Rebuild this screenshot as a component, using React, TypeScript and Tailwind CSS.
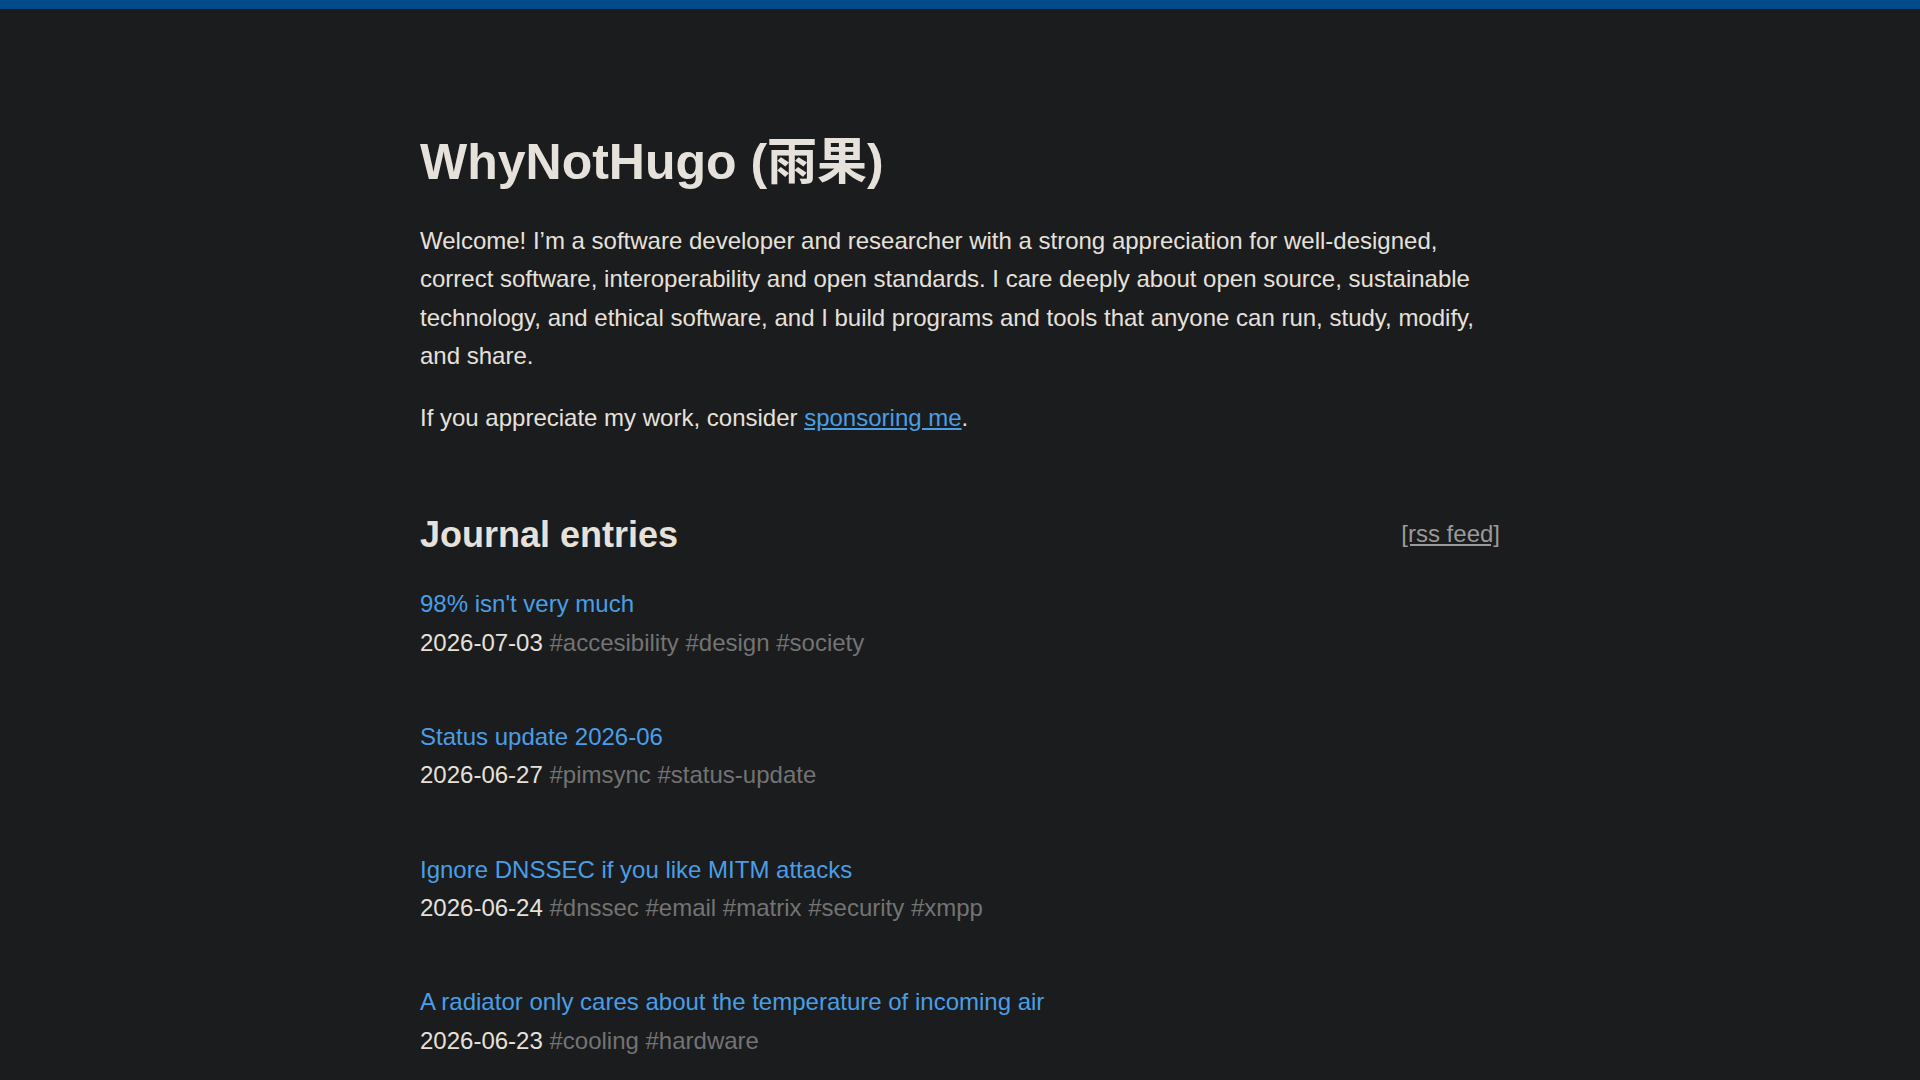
import React from "react";

const entries = [
  { title: "98% isn't very much", date: "2026-07-03", tags: ["accesibility", "design", "society"] },
  { title: "Status update 2026-06", date: "2026-06-27", tags: ["pimsync", "status-update"] },
  { title: "Ignore DNSSEC if you like MITM attacks", date: "2026-06-24", tags: ["dnssec", "email", "matrix", "security", "xmpp"] },
  { title: "A radiator only cares about the temperature of incoming air", date: "2026-06-23", tags: ["cooling", "hardware"] },
];

export default function App() {
  return (
    <div
      className="min-h-screen bg-[#1b1c1e] text-[#e6e1da] border-t-[9px] border-[#034a8a]"
      style={{ fontFamily: '"Liberation Sans", Arial, "Noto Sans CJK SC", sans-serif' }}
    >
      <main className="mx-auto w-[1080px] pt-[123px] text-[24px] leading-[1.6]">
        <h1 className="text-[50px] font-bold leading-[1.2]">WhyNotHugo (雨果)</h1>
        <p className="mt-[30px]">
          Welcome! I’m a software developer and researcher with a strong appreciation for well-designed, correct
          software, interoperability and open standards. I care deeply about open source, sustainable technology, and
          ethical software, and I build programs and tools that anyone can run, study, modify, and share.
        </p>
        <p className="mt-[23px]">
          If you appreciate my work, consider{" "}
          <a href="#" className="text-[#4a9ee6] underline">
            sponsoring me
          </a>
          .
        </p>

        <div className="mt-[76px] flex items-center justify-between">
          <h2 className="text-[36px] font-bold leading-[1.2]">Journal entries</h2>
          <a href="#" className="text-[#9a9a9a] underline">
            [rss feed]
          </a>
        </div>

        <ol className="mt-[29px]">
          {entries.map((e) => (
            <li key={e.date} className="mb-[56px]">
              <a href="#" className="text-[#4a9ee6]">
                {e.title}
              </a>
              <div>
                <span>{e.date}</span>{" "}
                <span className="text-[#737373]">{e.tags.map((t) => "#" + t).join(" ")}</span>
              </div>
            </li>
          ))}
        </ol>
      </main>
    </div>
  );
}
